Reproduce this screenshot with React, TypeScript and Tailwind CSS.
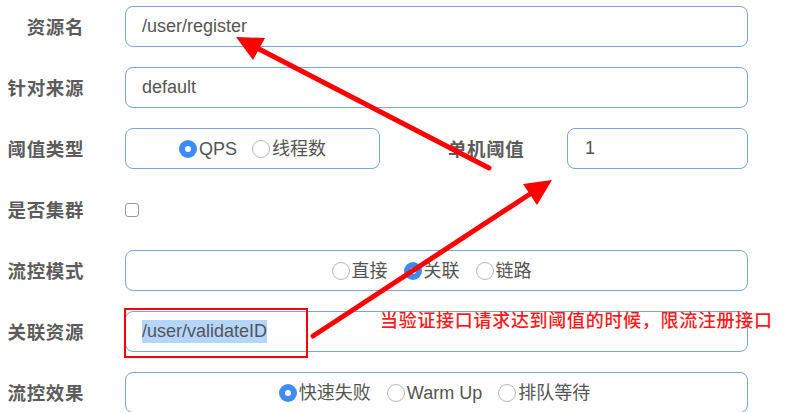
import React from 'react';

const font = "font-['Liberation_Sans','Noto_Sans_CJK_SC',sans-serif]";

function Label({ text }: { text: string }) {
    return (
        <div className="w-[84px] shrink-0 pt-[4px] text-right text-[18.5px] tracking-[0.6px] font-bold text-[#5c5c5c] leading-none">
            {text}
        </div>
    );
}

function Radio({ checked, label }: { checked?: boolean; label: string }) {
    return (
        <div className="flex items-center gap-[2px]">
            {checked ? (
                <span className="w-[18px] h-[18px] rounded-full bg-[#3f8bf5] flex items-center justify-center">
                    <span className="w-[6px] h-[6px] rounded-full bg-white" />
                </span>
            ) : (
                <span className="w-[18px] h-[18px] rounded-full border border-[#b8b8b8] bg-white" />
            )}
            <span className="text-[18px] text-[#555] leading-none">{label}</span>
        </div>
    );
}

const box = 'h-[41px] border-[1.5px] border-[#79a6dc] rounded-[8px] bg-white flex items-center';

export default function App() {
    return (
        <div className={`relative w-[812px] h-[412px] overflow-hidden bg-white ${font}`}>
            <div className="flex flex-col gap-[20px] pt-[6px]">
                {/* 资源名 */}
                <div className="flex items-center h-[41px]">
                    <Label text="资源名" />
                    <div className={`${box} ml-[41px] w-[623px] pl-[16px]`}>
                        <span className="text-[18px] text-[#555]">/user/register</span>
                    </div>
                </div>

                {/* 针对来源 */}
                <div className="flex items-center h-[41px]">
                    <Label text="针对来源" />
                    <div className={`${box} ml-[41px] w-[623px] pl-[16px]`}>
                        <span className="text-[18px] text-[#555]">default</span>
                    </div>
                </div>

                {/* 阈值类型 + 单机阈值 */}
                <div className="flex items-center h-[41px]">
                    <Label text="阈值类型" />
                    <div className={`${box} ml-[41px] w-[255px] justify-center gap-[15px]`}>
                        <Radio checked label="QPS" />
                        <Radio label="线程数" />
                    </div>
                    <div className="ml-[68px] w-[79px] pt-[4px] text-[18.5px] tracking-[0.6px] font-bold text-[#5c5c5c] leading-none">单机阈值</div>
                    <div className={`${box} ml-[40px] w-[181px] pl-[17px]`}>
                        <span className="text-[18px] text-[#555]">1</span>
                    </div>
                </div>

                {/* 是否集群 */}
                <div className="flex items-center h-[41px]">
                    <Label text="是否集群" />
                    <span className="ml-[41px] w-[14px] h-[14px] rounded-[3px] border border-[#9a9a9a] bg-white" />
                </div>

                {/* 流控模式 */}
                <div className="flex items-center h-[41px]">
                    <Label text="流控模式" />
                    <div className={`${box} ml-[41px] w-[623px] justify-center gap-[16px] pr-[10px]`}>
                        <Radio label="直接" />
                        <Radio checked label="关联" />
                        <Radio label="链路" />
                    </div>
                </div>

                {/* 关联资源 */}
                <div className="flex items-center h-[41px]">
                    <Label text="关联资源" />
                    <div className={`${box} ml-[41px] w-[623px] pl-[16px]`}>
                        <span className="text-[18px] text-[#555] bg-[#b4d5fe] leading-[23px]">/user/validateID</span>
                    </div>
                </div>

                {/* 流控效果 */}
                <div className="flex items-center h-[41px]">
                    <Label text="流控效果" />
                    <div className={`${box} ml-[41px] w-[623px] justify-center gap-[16px] pr-[4px]`}>
                        <Radio checked label="快速失败" />
                        <Radio label="Warm Up" />
                        <Radio label="排队等待" />
                    </div>
                </div>
            </div>

            {/* annotations */}
            <div className="absolute left-[124px] top-[308px] w-[184px] h-[50px] border-[2.5px] border-[#ff0000] pointer-events-none" />
            <div className="absolute left-[380px] top-[312px] text-[18px] tracking-[0.7px] font-medium text-[#ff1a1a] leading-none pointer-events-none">
                当验证接口请求达到阈值的时候，限流注册接口
            </div>
            <svg className="absolute left-0 top-0 pointer-events-none" width="812" height="412" viewBox="0 0 812 412">
                <line x1="489" y1="168" x2="259" y2="49" stroke="#ff0000" strokeWidth="5" strokeLinecap="round" />
                <polygon points="236,37 265,38 253,60" fill="#ff0000" />
                <line x1="313" y1="336" x2="530" y2="194" stroke="#ff0000" strokeWidth="5" strokeLinecap="round" />
                <polygon points="552,180 537,205 523,184" fill="#ff0000" />
            </svg>
        </div>
    );
}
